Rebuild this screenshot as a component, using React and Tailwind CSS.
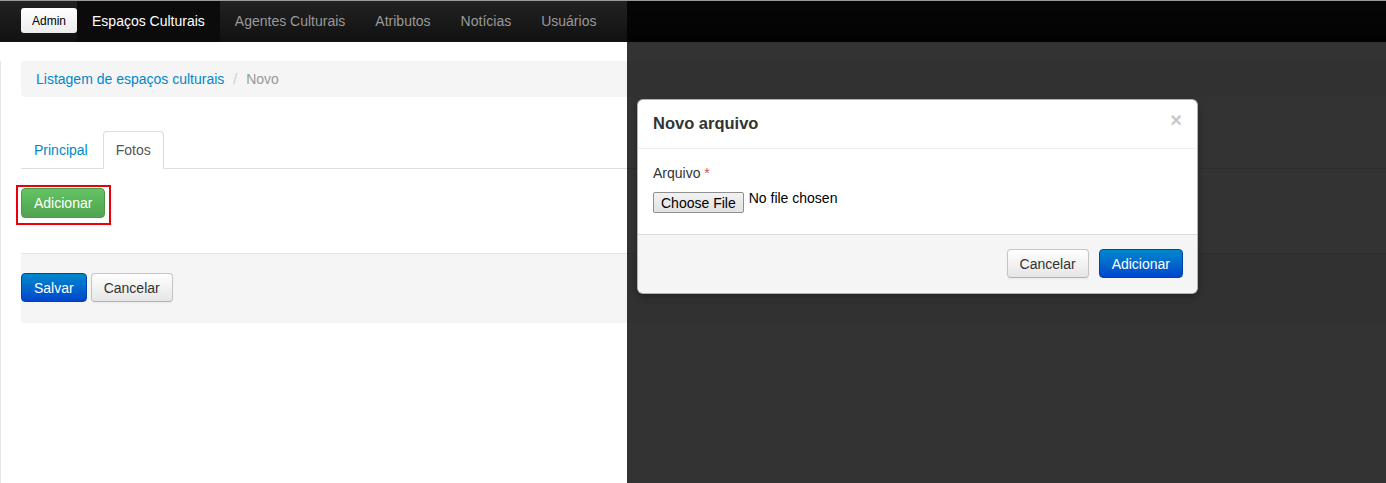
const navItems = ["Agentes Culturais", "Atributos", "Notícias", "Usuários"];

const btnDefault =
  "inline-flex h-[29px] items-center rounded-[4px] border border-[#c5c5c5] border-b-[#b3b3b3] bg-gradient-to-b from-white to-[#e6e6e6] px-[12px] text-[#333] shadow-[inset_0_1px_0_rgba(255,255,255,0.2),0_1px_2px_rgba(0,0,0,0.05)]";
const btnPrimary =
  "inline-flex h-[29px] items-center rounded-[4px] border border-[#0044aa] bg-gradient-to-b from-[#0088cc] to-[#0044cc] px-[12px] text-white";

const App = () => {
  return (
    <div className="relative h-[483px] w-[1386px] overflow-hidden border-t border-[#9a9a9a] bg-white font-['Liberation_Sans',Arial,sans-serif] text-[14px] leading-[20px] text-[#333]">
      {/* navbar */}
      <nav className="flex h-[41px] items-stretch bg-gradient-to-b from-[#222] to-[#111] pl-[21px]">
        <div className="flex items-start pt-[7px]">
          <span className="inline-flex h-[25px] items-center rounded-[3px] bg-gradient-to-b from-white to-[#ececec] px-[11px] text-[12px] text-black">
            Admin
          </span>
        </div>
        <span className="flex items-center bg-[#0b0b0b] px-[15px] pb-[2px] text-white">Espaços Culturais</span>
        {navItems.map((item) => (
          <span key={item} className="flex items-center px-[15px] pb-[2px] text-[#999]">
            {item}
          </span>
        ))}
      </nav>

      <div className="h-full border-l border-[#e3e3e3] pl-[20px]">
        {/* breadcrumb */}
        <div className="mt-[19px] flex rounded-l-[4px] bg-[#f5f5f5] px-[15px] py-[8px]">
          <span className="text-[#0088cc]">Listagem de espaços culturais</span>
          <span className="px-[9px] text-[#ccc]">/</span>
          <span className="text-[#999]">Novo</span>
        </div>

        {/* tabs */}
        <div className="mt-[34px] flex border-b border-[#ddd]">
          <span className="-mb-px mr-[2px] rounded-t-[4px] border border-transparent px-[12px] py-[8px] text-[#0088cc]">
            Principal
          </span>
          <span className="-mb-px rounded-t-[4px] border border-[#ddd] border-b-white bg-white px-[12px] py-[8px] text-[#555]">
            Fotos
          </span>
        </div>

        <div className="-ml-[5px] mt-[16px] w-fit border-2 border-[#e8000b] pb-[5px] pl-[3px] pr-[4px] pt-[1px]">
          <span className="inline-flex h-[30px] items-center rounded-[4px] border border-[#4a9a4a] bg-gradient-to-b from-[#62c462] to-[#51a351] px-[12px] text-white">
            Adicionar
          </span>
        </div>

        {/* form actions */}
        <div className="mt-[28px] flex gap-[4px] border-t border-[#e5e5e5] bg-[#f5f5f5] pb-[21px] pt-[19px]">
          <span className={btnPrimary}>Salvar</span>
          <span className={btnDefault}>Cancelar</span>
        </div>
      </div>

      {/* backdrop */}
      <div className="absolute bottom-0 left-[627px] right-0 top-0 bg-black/80" />

      {/* modal */}
      <div className="absolute left-[637px] top-[98px] w-[561px] rounded-[6px] border border-black/30 bg-white shadow-[0_3px_7px_rgba(0,0,0,0.3)]">
        <div className="flex items-start justify-between border-b border-[#eee] px-[15px] pb-[10px] pt-[8px]">
          <h3 className="text-[16.5px] font-bold leading-[30px] text-[#333]">Novo arquivo</h3>
          <span className="mt-[2px] text-[20px] font-bold leading-[20px] text-[#c8c8c8]">×</span>
        </div>
        <div className="px-[15px] pb-[16px] pt-[14px]">
          <div className="mb-[5px]">
            Arquivo <span className="text-[#d9534f]">*</span>
          </div>
          <div className="flex h-[30px] items-start">
            <span className="mt-[4px] inline-flex h-[21px] items-center rounded-[2px] border border-[#8f8f8f] bg-gradient-to-b from-[#f2f2f2] to-[#e2e2e2] px-[7px] text-[14px] text-black">
              Choose File
            </span>
            <span className="ml-[5px] text-black">No file chosen</span>
          </div>
        </div>
        <div className="flex justify-end gap-[10px] rounded-b-[6px] border-t border-[#ddd] bg-[#f5f5f5] pb-[15px] pl-[15px] pr-[14px] pt-[14px]">
          <span className={btnDefault}>Cancelar</span>
          <span className={btnPrimary + " px-[12.5px]"}>Adicionar</span>
        </div>
      </div>
    </div>
  );
};

export default App;
